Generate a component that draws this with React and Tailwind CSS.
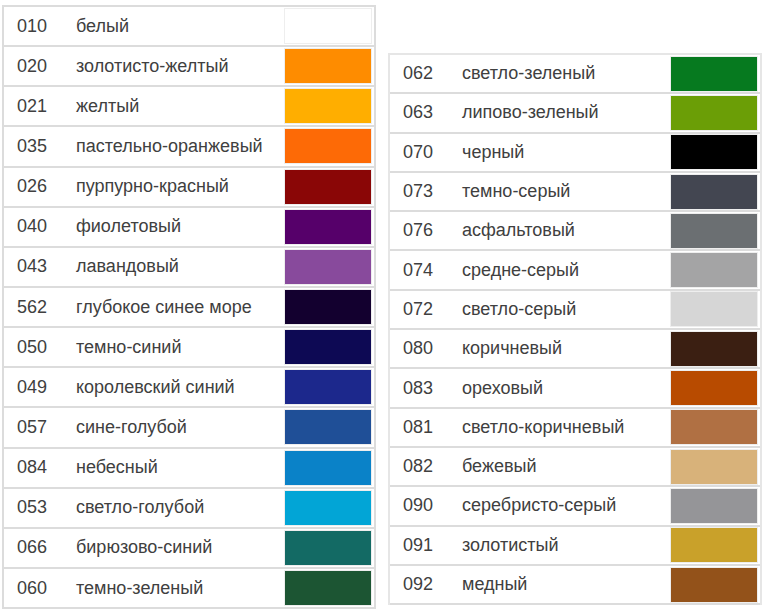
const left = [
  { code: '010', name: 'белый', color: '#ffffff' },
  { code: '020', name: 'золотисто-желтый', color: '#fe8c00' },
  { code: '021', name: 'желтый', color: '#ffae00' },
  { code: '035', name: 'пастельно-оранжевый', color: '#fd6a06' },
  { code: '026', name: 'пурпурно-красный', color: '#8a0606' },
  { code: '040', name: 'фиолетовый', color: '#56006a' },
  { code: '043', name: 'лавандовый', color: '#884a9c' },
  { code: '562', name: 'глубокое синее море', color: '#13002f' },
  { code: '050', name: 'темно-синий', color: '#0d0954' },
  { code: '049', name: 'королевский синий', color: '#1c288c' },
  { code: '057', name: 'сине-голубой', color: '#1f4f97' },
  { code: '084', name: 'небесный', color: '#0a82c8' },
  { code: '053', name: 'светло-голубой', color: '#02a5d6' },
  { code: '066', name: 'бирюзово-синий', color: '#136a64' },
  { code: '060', name: 'темно-зеленый', color: '#1c5533' },
]

const right = [
  { code: '062', name: 'светло-зеленый', color: '#067a1f' },
  { code: '063', name: 'липово-зеленый', color: '#6b9e06' },
  { code: '070', name: 'черный', color: '#000000' },
  { code: '073', name: 'темно-серый', color: '#434651' },
  { code: '076', name: 'асфальтовый', color: '#6b6f72' },
  { code: '074', name: 'средне-серый', color: '#a4a4a5' },
  { code: '072', name: 'светло-серый', color: '#d6d6d6' },
  { code: '080', name: 'коричневый', color: '#3b1f12' },
  { code: '083', name: 'ореховый', color: '#b84b00' },
  { code: '081', name: 'светло-коричневый', color: '#b07043' },
  { code: '082', name: 'бежевый', color: '#d8b27a' },
  { code: '090', name: 'серебристо-серый', color: '#959598' },
  { code: '091', name: 'золотистый', color: '#c9a12a' },
  { code: '092', name: 'медный', color: '#93521a' },
]

function Row({ item, tall }) {
  return (
    <div
      className={`flex items-center border-b-2 border-[#dcdcdc] ${tall ? 'h-[40.15px]' : 'h-[39.3px]'}`}
    >
      <span className="w-[72px] pl-[13px] shrink-0">{item.code}</span>
      <span className="flex-1 whitespace-nowrap">{item.name}</span>
      <div
        className="w-[88px] h-[36px] mr-[2px] shrink-0 border border-[#eeeeee]"
        style={{ backgroundColor: item.color }}
      />
    </div>
  )
}

export default function App() {
  return (
    <div
      className="w-[764px] h-[612px] bg-white flex text-[18px] text-[#404040] overflow-hidden"
      style={{ fontFamily: '"Liberation Sans", Arial, sans-serif' }}
    >
      {/* left table */}
      <div className="ml-[2px] w-[374px] pt-[5px] shrink-0">
        <div className="border-t-2 border-l-2 border-r-2 border-[#dcdcdc]">
          {left.map((item) => (
            <Row key={item.code} item={item} tall />
          ))}
        </div>
      </div>

      {/* right table */}
      <div className="ml-[12px] w-[374px] pt-[53px] shrink-0">
        <div className="border-t-2 border-l-2 border-r-2 border-[#e6e6e6]">
          {right.map((item) => (
            <Row key={item.code} item={item} />
          ))}
        </div>
      </div>
    </div>
  )
}
